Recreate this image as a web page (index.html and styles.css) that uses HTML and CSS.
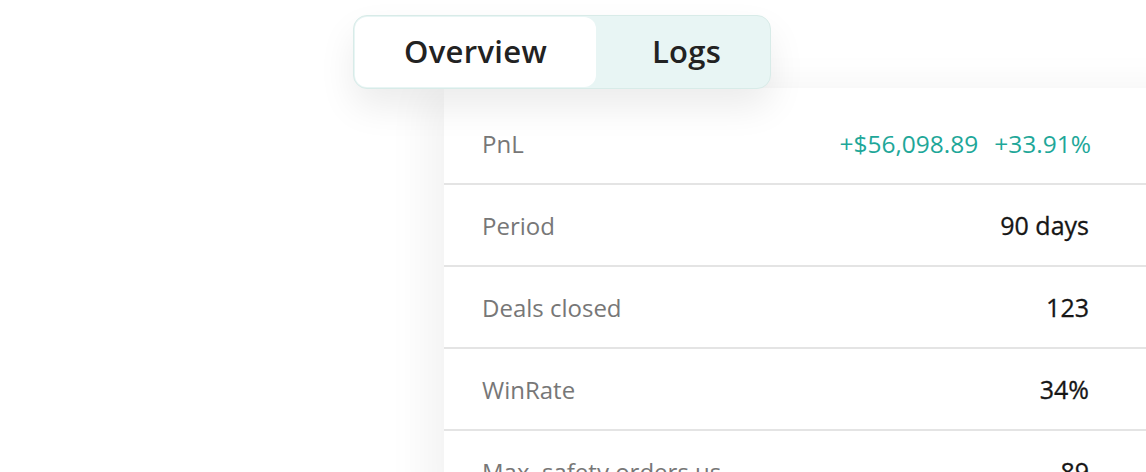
FILE: index.html
```html
<!DOCTYPE html>
<html lang="en">
<head>
    <meta charset="UTF-8">
    <meta name="viewport" content="width=device-width, initial-scale=1.0">
    <title>Bot statistics</title>
    <link rel="stylesheet" href="styles.css">
</head>
<body>

<div class="page">
    <div class="tabs">
        <button class="tab active">Overview</button>
        <button class="tab">Logs</button>
    </div>

    <div class="stats-card">
        <div class="stat-row">
            <span class="stat-label">PnL</span>
            <span class="stat-value profit"><span>+$56,098.89</span><span>+33.91%</span></span>
        </div>
        <div class="stat-row">
            <span class="stat-label">Period</span>
            <span class="stat-value">90 days</span>
        </div>
        <div class="stat-row">
            <span class="stat-label">Deals closed</span>
            <span class="stat-value">123</span>
        </div>
        <div class="stat-row">
            <span class="stat-label">WinRate</span>
            <span class="stat-value">34%</span>
        </div>
        <div class="stat-row">
            <span class="stat-label">Max. safety orders used</span>
            <span class="stat-value">89</span>
        </div>
    </div>
</div>

</body>
</html>
```

FILE: styles.css
```css
body {
    font-family: "Open Sans", "Noto Sans", sans-serif;
    background-color: #ffffff;
    margin: 0;
    padding: 0;
    overflow: hidden;
    height: 472px;
}
.page {
    display: flex;
    flex-direction: column;
    align-items: flex-start;
    padding-top: 15px;
}
.tabs {
    position: relative;
    z-index: 2;
    display: flex;
    margin-left: 353px;
    width: 418px;
    height: 74px;
    box-sizing: border-box;
    padding: 1px;
    background-color: #e8f5f4;
    border: 1px solid #d8ebe8;
    border-radius: 14px;
    box-shadow: 0 18px 36px rgba(0, 0, 0, 0.08);
}
.tab {
    font-family: inherit;
    font-size: 31px;
    font-weight: 600;
    color: #222222;
    letter-spacing: 0.3px;
    background: none;
    border: none;
    border-radius: 12px;
    cursor: pointer;
    padding: 0 0 2px 8px;
    flex: 1;
}
.tab.active {
    flex: 0 0 241px;
    padding: 0 0 2px;
    background-color: #ffffff;
}
.stats-card {
    margin-left: 444px;
    margin-top: -1px;
    width: 760px;
    padding-top: 15px;
    background: #ffffff;
    box-shadow: -18px 0 40px rgba(0, 0, 0, 0.05);
}
.stat-row {
    display: flex;
    align-items: center;
    height: 80px;
    border-bottom: 2px solid #e4e4e4;
}
.stat-label {
    width: 238px;
    padding-left: 38px;
    overflow: hidden;
    white-space: nowrap;
    font-size: 24px;
    color: #777777;
}
.stat-value {
    flex: 1;
    text-align: right;
    padding-right: 115px;
    font-size: 25px;
    font-weight: 400;
    color: #161616;
    -webkit-text-stroke: 0.3px #161616;
}
.stat-value.profit {
    display: flex;
    justify-content: flex-end;
    gap: 16px;
    padding-right: 113px;
    font-size: 24.5px;
    color: #1ea799;
    -webkit-text-stroke: 0;
}
```
